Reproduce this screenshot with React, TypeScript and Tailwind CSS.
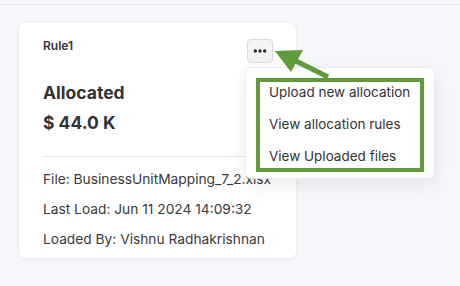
import { MoreHorizontal } from 'lucide-react'

const details = [
  'File: BusinessUnitMapping_7_2.xlsx',
  'Last Load: Jun 11 2024 14:09:32',
  'Loaded By: Vishnu Radhakrishnan',
]

const menuItems = ['Upload new allocation', 'View allocation rules', 'View Uploaded files']

export default function App() {
  return (
    <div
      className="relative w-[460px] h-[286px] overflow-hidden bg-[#f6f7fb] text-[#333]"
      style={{ fontFamily: 'Inter, "Noto Sans", sans-serif' }}
    >
      <div className="h-[5px] border-b border-[#e8e9ee]" />

      <div className="relative ml-[19px] mt-[18px] w-[277px] h-[235px] bg-white rounded-md shadow-[0_1px_4px_rgba(0,0,0,0.08)] px-6">
        <div className="flex items-start justify-between pt-[15px]">
          <span className="text-xs font-semibold leading-4">Rule1</span>
          <button className="mt-px -mr-px w-[26px] h-6 flex items-center justify-center bg-[#f3f3f4] border border-[#dcdcdf] rounded text-[#222]">
            <MoreHorizontal size={16} strokeWidth={3} />
          </button>
        </div>

        <div className="mt-[18px] text-[17.5px] font-bold leading-6">Allocated</div>
        <div className="mt-[6px] text-[17.5px] font-bold leading-6">$ 44.0 K</div>

        <div className="mt-[21px] border-t border-[#e6e6e6]" />

        <div className="mt-[7px] text-[13.75px] text-[#3a3a3a] whitespace-nowrap">
          {details.map(d => (
            <div key={d} className="leading-[30px]">{d}</div>
          ))}
        </div>

        <div className="absolute left-[226px] top-[44px] w-[190px] h-[112px] bg-white border border-[#ececef] rounded-md shadow-[0_6px_20px_rgba(0,0,0,0.08)] pt-[8px] z-10">
          {menuItems.map(item => (
            <div key={item} className="h-8 flex items-center pl-[23px] text-[13.5px] text-[#333] whitespace-nowrap">
              {item}
            </div>
          ))}
          <div className="absolute left-[10px] top-[10px] w-[168px] h-[94px] border-4 border-[#5f9a3b]" />
        </div>
      </div>

      <svg className="absolute left-0 top-0 z-20 pointer-events-none" width="460" height="286">
        <line x1="296" y1="61" x2="328" y2="77" stroke="#5f9a3b" strokeWidth="5" />
        <polygon points="275,51 303,50 291,72" fill="#5f9a3b" />
      </svg>
    </div>
  )
}
